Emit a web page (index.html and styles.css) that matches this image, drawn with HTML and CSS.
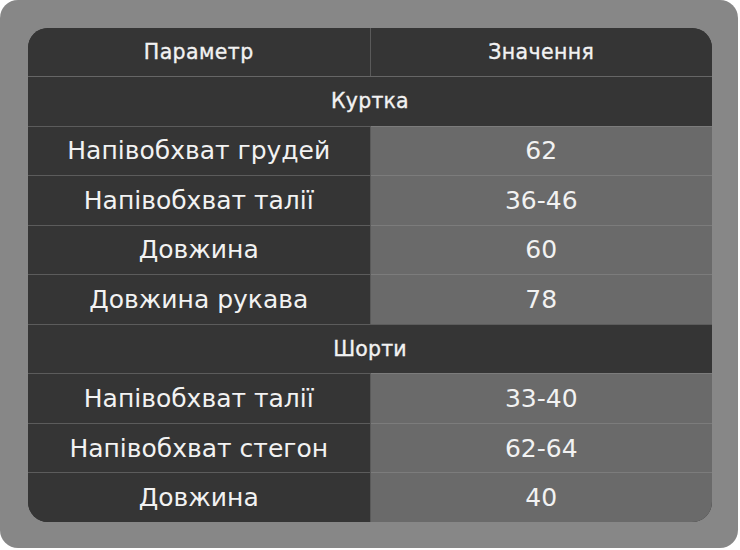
FILE: index.html
```html
<!DOCTYPE html>
<html lang="uk">
<head>
<meta charset="utf-8">
<link rel="stylesheet" href="styles.css">
</head>
<body>
<div class="frame">
  <div class="table-wrap">
    <table class="sizes">
      <thead>
        <tr><th>Параметр</th><th>Значення</th></tr>
      </thead>
      <tbody>
        <tr class="section"><td colspan="2">Куртка</td></tr>
        <tr><td>Напівобхват грудей</td><td class="val">62</td></tr>
        <tr><td>Напівобхват талії</td><td class="val">36-46</td></tr>
        <tr><td>Довжина</td><td class="val">60</td></tr>
        <tr><td>Довжина рукава</td><td class="val">78</td></tr>
        <tr class="section"><td colspan="2">Шорти</td></tr>
        <tr><td>Напівобхват талії</td><td class="val">33-40</td></tr>
        <tr><td>Напівобхват стегон</td><td class="val">62-64</td></tr>
        <tr><td>Довжина</td><td class="val">40</td></tr>
      </tbody>
    </table>
  </div>
</div>
</body>
</html>
```

FILE: styles.css
```css
html, body {
  margin: 0;
  padding: 0;
  background: #ffffff;
}
.frame {
  width: 738px;
  height: 548px;
  box-sizing: border-box;
  padding: 28px 26px 26px 28px;
  background: #878787;
  border-radius: 18px;
}
.table-wrap {
  width: 684px;
  height: 494px;
  border-radius: 20px;
  overflow: hidden;
  background: #353535;
}
.sizes {
  width: 100%;
  height: 494px;
  border-collapse: collapse;
  table-layout: fixed;
  font-family: "DejaVu Sans", sans-serif;
  color: #f2f2f2;
}
.sizes th, .sizes td {
  height: 48px;
  padding: 0;
  text-align: center;
  vertical-align: middle;
  background: #353535;
}
.sizes th {
  font-size: 20.5px;
  font-weight: 400;
  letter-spacing: 0.4px;
  -webkit-text-stroke: 0.35px #f2f2f2;
  border-bottom: 1px solid #666666;
}
.sizes th + th {
  border-left: 1px solid #5a5a5a;
}
.sizes td {
  font-size: 25px;
  font-weight: 400;
  border-top: 1px solid #5c5c5c;
}
.sizes .section td {
  font-size: 20.5px;
  letter-spacing: 0.2px;
  -webkit-text-stroke: 0.35px #f2f2f2;
}
.sizes td.val {
  background: #6a6a6a;
  border-top-color: #7c7c7c;
  border-left: 1px solid #5a5a5a;
}
```
